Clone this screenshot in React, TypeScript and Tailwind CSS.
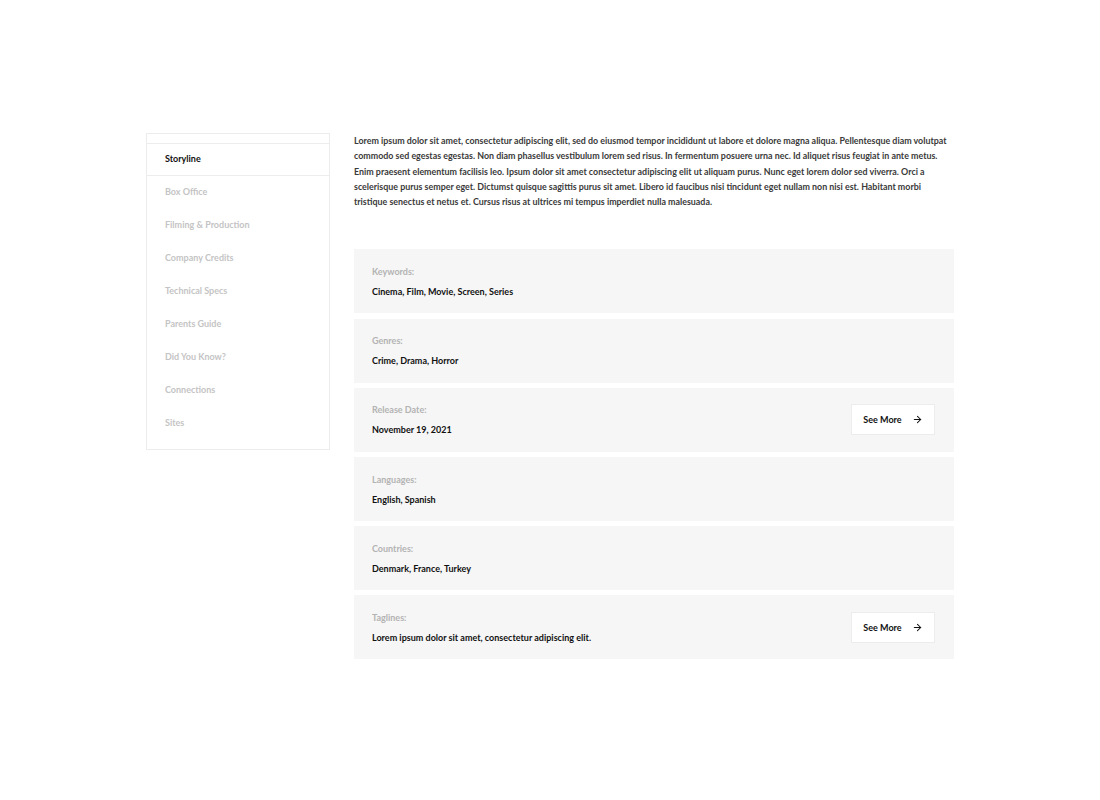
import { ArrowRight } from "lucide-react";

const navItems = [
  "Storyline",
  "Box Office",
  "Filming & Production",
  "Company Credits",
  "Technical Specs",
  "Parents Guide",
  "Did You Know?",
  "Connections",
  "Sites",
];

type detail = {
  label: string;
  value: string;
  more?: boolean;
};

const details: detail[] = [
  { label: "Keywords:", value: "Cinema, Film, Movie, Screen, Series" },
  { label: "Genres:", value: "Crime, Drama, Horror" },
  { label: "Release Date:", value: "November 19, 2021", more: true },
  { label: "Languages:", value: "English, Spanish" },
  { label: "Countries:", value: "Denmark, France, Turkey" },
  { label: "Taglines:", value: "Lorem ipsum dolor sit amet, consectetur adipiscing elit.", more: true },
];

const App = () => {
  return (
    <div className="min-h-[800px] w-[1100px] bg-white font-['Lato',sans-serif]">
      <div className="flex gap-[24px] pl-[146px] pt-[133px]">
        <aside className="w-[184px] shrink-0 self-start border border-[#ececec] pt-[9px] pb-[9px]">
          {navItems.map((item, i) => (
            <div
              key={item}
              className={
                i === 0
                  ? "flex h-[33px] items-center border-y border-[#ececec] px-[18px] pb-[1px] text-[9px] font-bold text-[#111]"
                  : "flex h-[33px] items-center px-[18px] pb-[1px] text-[9px] font-bold text-[#c4c4c4]"
              }
            >
              {item}
            </div>
          ))}
        </aside>
        <main className="w-[600px]">
          <p className="text-[8.9px] font-bold leading-[15.3px] text-[#3a3a3a]">
            Lorem ipsum dolor sit amet, consectetur adipiscing elit, sed do eiusmod tempor incididunt ut labore et dolore magna aliqua. Pellentesque diam volutpat commodo sed egestas egestas. Non diam phasellus vestibulum lorem sed risus. In fermentum posuere urna nec. Id aliquet risus feugiat in ante metus. Enim praesent elementum facilisis leo. Ipsum dolor sit amet consectetur adipiscing elit ut aliquam purus. Nunc eget lorem dolor sed viverra. Orci a scelerisque purus semper eget. Dictumst quisque sagittis purus sit amet. Libero id faucibus nisi tincidunt eget nullam non nisi est. Habitant morbi tristique senectus et netus et. Cursus risus at ultrices mi tempus imperdiet nulla malesuada.
          </p>
          <div className="mt-[40px] flex flex-col gap-[5.2px]">
            {details.map((d) => (
              <div key={d.label} className="flex h-[64px] items-center justify-between bg-[#f6f6f6] pl-[18px] pr-[19px]">
                <div className="flex flex-col gap-[9px]">
                  <span className="text-[9px] font-bold leading-[11px] text-[#b3b3b3]">{d.label}</span>
                  <span className="text-[9px] font-bold leading-[11px] text-[#111]">{d.value}</span>
                </div>
                {d.more && (
                  <button className="flex h-[31px] w-[84px] items-center justify-center gap-[10px] border border-[#ececec] bg-white text-[9px] font-bold text-[#111]">
                    See More
                    <ArrowRight size={11} strokeWidth={2.2} />
                  </button>
                )}
              </div>
            ))}
          </div>
        </main>
      </div>
    </div>
  );
};

export default App;
